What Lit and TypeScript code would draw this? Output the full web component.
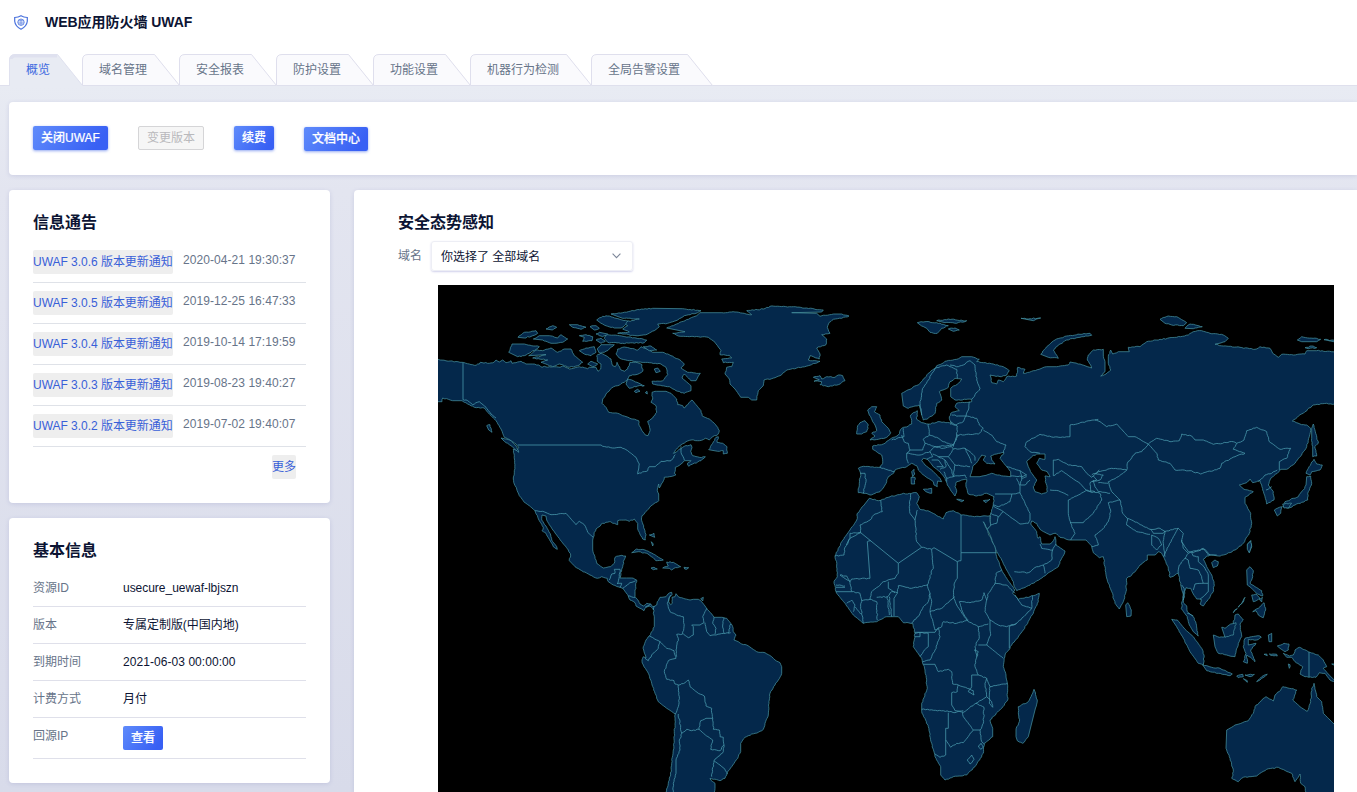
import { LitElement, html, svg, css } from "lit";
import { customElement } from "lit/decorators.js";

// Coastlines are digitised on overlapping sheets at three times the drawing scale.
// Each sheet has its own origin in map space.
const SHEETS: Record<string, [number, number]> = {
  a: [436, 284],
  b: [620, 284],
  c: [520, 500],
  d: [820, 470],
  e: [840, 300],
  f: [1040, 300],
  g: [1060, 520],
};

// Repeatable noise in -1..1 for a place on the map.
function noise(x: number, y: number): number {
  const n = Math.sin(x * 12.9898 + y * 78.233) * 43758.5453;
  return (n - Math.floor(n)) * 2 - 1;
}

// Turns sheet coordinates into map coordinates and roughens the longer natural edges.
// Axis-aligned and very long edges are surveyed boundaries and stay straight.
function points(...parts: string[]): string {
  const raw = parts.flatMap((part) => {
    const [ox, oy] = SHEETS[part[0]];
    return part
      .slice(1)
      .trim()
      .split(/\s+/)
      .map((pair) => {
        const [x, y] = pair.split(",").map(Number);
        return [ox + x / 3, oy + y / 3];
      });
  });
  const out: string[] = [];
  raw.forEach(([x, y], i) => {
    out.push(`${x.toFixed(1)},${y.toFixed(1)}`);
    if (i === raw.length - 1) return;
    const [nx, ny] = raw[i + 1];
    const dx = nx - x;
    const dy = ny - y;
    const len = Math.hypot(dx, dy);
    if (len < 3.4 || len > 24 || Math.abs(dx) < 0.2 || Math.abs(dy) < 0.2) return;
    const steps = Math.round(len / 1.9);
    for (let s = 1; s < steps; s++) {
      const px = x + (dx * s) / steps;
      const py = y + (dy * s) / steps;
      const k = 0.5 * noise(Math.round(px), Math.round(py));
      out.push(`${(px + (Math.abs(dy) / len) * k).toFixed(1)},${(py + (Math.abs(dx) / len) * k).toFixed(1)}`);
    }
  });
  return out.join(" ");
}

const AMERICAS = points(
  "a 6,226 42,231 78,235 100,240 115,244 130,240 133,235 160,238 175,234 180,228 190,234 200,228 210,236 225,230 228,238 240,236 255,232 270,240 290,240 308,243 318,250 325,247 345,249 372,250 380,246 400,255 430,248 455,254 460,250 480,250 486,262 494,255 495,240 484,232 482,215 495,207 510,215 525,225 530,245 538,248 543,235 555,258 566,262 575,255 582,235 605,236 618,242 620,262 600,272 580,275 573,290 560,296 545,305 527,312 510,330 500,345 498,358 510,370 518,385 545,388 560,395 590,405 608,410 610,425 618,440 628,453 636,455 642,440 640,425 635,412 650,402 662,385 660,365 645,355 650,345 648,325 662,322 690,322 705,328 715,338 722,345 725,362 740,365 744,372 755,362 768,348 780,362 795,380 798,395 820,405 835,418 845,430 850,440 845,452 835,455 820,468 808,463 790,470 765,468 750,473 735,483 722,495 712,508 725,500 745,487 765,482 768,490 764,502 770,515 790,520 808,518 795,530 770,540 758,547 754,540 765,530 745,530 735,540 718,550 715,568 720,572 700,578 685,580 680,595 670,612 668,600 664,620 668,630 668,650 650,662 630,682 618,695 617,710 625,735 630,752 628,768 620,765 610,745 605,735 605,718 595,705 580,712 570,708 545,710 545,722 520,713 500,718 480,735 475,745 472,760",
  "c 218,120 218,150 225,175 232,192 250,204 272,200 283,190 285,172 300,167 317,168 312,180 308,200 305,208 302,228 300,234 320,234 335,234 350,240 347,260 345,275 345,290 352,298 360,312 370,318 380,310 392,312 398,320 410,315 412,305 420,292 438,290 444,282 455,277 456,284 448,293 446,305 452,314 457,310 456,292 465,290 468,281 475,290 490,295 510,300 520,298 535,298 542,302 555,318 562,328 575,342 582,352 600,352 620,355 632,370 638,380 640,395 648,405 642,420 655,425 665,432 680,435 695,445 710,455 735,458 755,470 765,480 780,488 785,500 785,520 775,540 765,555 750,580 748,600 746,620 745,645 735,670 730,688 715,697 695,702 675,712 662,730 662,755 655,770 645,785 635,800 625,812 620,825 615,835 600,842 580,838 570,835 572,840 585,850 585,865 582,890 435,890 445,850 452,825 455,790 460,750 463,700 465,660 466,642 440,625 415,605 405,580 395,550 385,520 372,500 366,485 370,470 378,474 372,455 370,440 378,420 388,408 395,395 403,380 403,350 400,340 402,332 398,325 390,318 378,322 372,332 360,325 348,318 345,308 330,300 325,288 318,278 308,265 300,262 280,255 265,245 262,235 245,230 232,235 210,225 185,212 165,200 148,182 152,165 145,150 125,125 110,105 95,85 80,60 78,48 66,45 65,60 80,82 92,105 95,120 110,140 112,148 100,140 88,118 78,100 66,92 70,82 58,62 45,32",
  "a 280,665 265,655 250,635 242,615 235,600 232,585 235,560 236,530 235,515 232,495 245,500 248,490 240,480 225,470 205,460 200,448 195,435 180,410 165,395 155,385 145,372 115,370 100,362 85,355 78,350 50,350 20,342 18,353 6,353",
  "a 0,353 0,226"
);

const EURASIA = points(
  "e 185,280 210,268 240,250 265,220 295,195 320,183 350,178 365,170 395,170 418,178 410,185 430,188 460,192 490,200 508,212 500,225 480,230 450,225 455,248 470,252 475,240 490,245 500,230 530,228 533,202 555,208 550,220 580,212 620,200 650,200 685,195 690,186 720,192 755,204",
  "f 152,195 142,180 145,165 160,150 190,148 190,165 195,185 195,215 182,228 198,222 212,210 205,190 205,170 212,150 218,162 235,155 268,155 265,142 300,140 320,125 360,118 410,112 445,105 460,95 485,92 510,100 550,105 565,115 555,125 525,133 550,138 600,142 645,148 660,140 690,145 698,160 715,172 725,163 760,165 795,162 800,152 830,152 890,157 890,313 860,310 820,315 795,335 757,363 780,372 800,375 812,385 808,410 800,440 780,470 765,490 740,508 722,508 712,520 692,535 688,545 685,555 700,575 702,600 680,612 675,590 668,570 665,555 660,542 638,548 630,537 620,548 598,555 612,568 640,575 615,592 615,610 632,640 635,670 628,700 610,730 585,750 560,762 535,768",
  "g 468,107 455,105 440,108 430,118 440,140 455,165 462,190 460,215 445,238 430,258 420,252 424,238 410,237 400,222 392,205 378,203 372,225 370,248 380,258 382,275 400,290 408,310 415,348 400,335 388,315 382,290 364,266 366,245 370,225 362,195 355,160 345,165 330,172 325,145 315,120 305,100 295,95 285,105 262,105 262,120 240,135 215,165 200,175 198,215 190,245 178,267 165,250 155,215 142,180 135,140 130,110 118,113 100,98 95,78 78,60 30,60 0,52",
  "d 708,190 690,195 680,190 660,178 650,160 635,153 632,162 650,185 654,205 660,200 665,222 690,222 700,212 705,200 708,225 735,243 725,265 715,290 670,320 640,340 590,362 583,350 580,335 560,300 545,270 525,235 510,195 502,178 511,165 512,130 520,105 522,80 500,70 470,78 445,72 438,50 440,28",
  "e 375,538 365,540 350,545 345,560 350,572 345,588 335,575 322,555 315,535 300,515 280,500 265,480 250,475 245,482 255,495 275,510 300,535 305,545 293,543 292,560 282,555 280,545 250,525 235,510 230,497 215,490 200,500 165,510 162,518 145,530 135,555 120,575 90,585 78,580 55,578 58,550 62,520 55,505 65,500 120,502 128,490 125,465 98,448 98,438 130,432 150,418 175,405 185,385 205,378 215,372 212,345 220,338 232,332 230,358 245,368 265,372 300,365 335,370 328,355 332,340 345,335 358,332 345,320 350,310 395,305 395,298 345,300 332,290 332,265 360,245 365,237 345,235 330,245 325,262 298,275 305,300 290,310 285,340 265,355 250,360 245,345 238,315 225,318 205,325 190,318"
);

const AFRICA = points(
  "d 148,85 175,92 210,80 245,72 290,68 298,80 290,100 300,118 330,125 370,147 378,128 400,122 425,135 480,140 510,137 512,165 502,178 490,155 505,190 525,232 530,260 545,300 560,325 585,360 578,370 595,388 630,380 658,370 655,395 640,430 610,480 575,525 555,555 550,590 558,615 562,640 563,690 545,715 510,750 518,775 518,800 493,820 490,850 465,890 440,915 400,920 375,930 362,915 362,890 345,860 335,820 325,770 305,725 305,700 322,655 315,600 305,565 280,530 285,490 278,460 250,458 235,440 200,440 170,455 130,460 100,435 75,400 50,370 42,335 52,320 50,285 45,258 65,215 90,180 110,150 112,130 130,108"
);

const ISLANDS = [
  // Greenland
  "b 140,132 165,122 190,112 210,103 230,95 240,86 300,86 345,84 395,92 380,80 430,75 450,67 520,68 560,72 610,78 605,84 515,86 590,88 600,97 640,90 665,90 687,96 665,103 640,106 628,115 622,130 630,148 605,152 620,165 618,182 590,192 600,210 598,225 570,215 565,228 600,232 565,245 530,252 500,258 480,275 455,284 432,288 430,305 415,320 410,348 395,348 385,340 362,340 345,315 330,300 328,285 315,270 320,250 335,248 340,235 310,236 305,225 335,222 328,214 300,212 303,200 285,175 265,160 235,158 175,156 158,148 195,143",
  // Arctic archipelago
  "a 525,90 560,86 600,78 650,73 740,74 795,80 780,88 745,95 720,110 695,118 665,120 670,128 655,140 635,150 600,155 560,150 545,148 580,144 560,135 575,125 560,115 610,105 560,103",
  "a 482,108 500,97 520,96 540,103 575,112 565,125 555,132 535,132 515,127 495,118",
  "a 540,210 545,195 560,190 580,192 605,198 615,188 635,196 650,205 680,205 705,215 735,230 745,240 735,252 755,265 793,268 780,290 765,290 745,270 738,282 765,305 765,320 745,328 720,320 700,308 650,300 648,292 680,290 695,272 690,250 675,240 640,236 580,230 550,222",
  "a 510,152 550,155 600,162 632,168 625,176 560,178 515,175 505,163",
  "a 430,155 450,152 470,158 468,170 440,172 445,160",
  "a 278,215 300,198 320,200 345,192 365,205 385,195 405,195 415,215 440,235 425,245 400,250 370,240 350,248 315,235 335,228 290,222 330,212",
  "a 218,205 228,180 265,180 310,188 285,205 265,215 245,218",
  "a 246,160 265,145 300,140 305,148 290,155 265,162",
  "a 292,165 310,155 340,155 365,162 375,152 395,165 380,175 345,178 320,168",
  "a 330,135 350,125 362,130 350,138",
  "a 400,122 425,122 450,130 435,136 410,130",
  "a 462,128 480,125 490,133 475,138",
  "a 480,168 495,163 508,172 495,178",
  "a 430,200 450,192 475,188 480,205 465,215 445,210",
  "a 484,195 495,182 535,182 520,195 505,205 490,207",
  "a 455,240 465,232 485,240 470,248",
  "a 622,188 645,186 662,198 640,200",
  "a 575,285 592,290 625,305 605,306 580,313 570,300",
  "a 655,255 665,252 673,262 660,266",
  "a 595,322 605,316 612,322 600,326",
  "a 628,326 633,322 634,330",
  "a 490,145 480,150 500,158 515,150",
  // Vancouver, Haida Gwaii, Alexander archipelago
  "a 195,462 225,470 243,490 248,505 225,485 205,472",
  "a 152,425 162,422 168,445 158,438",
  // Newfoundland
  "a 818,497 830,478 840,460 847,458 843,475 860,478 873,488 874,508 862,510 862,500 845,502",
  // Iceland
  "b 580,280 600,275 605,285 620,278 645,280 655,273 668,275 675,290 655,302 625,308 600,302 605,293 582,292 598,287",
  // Caribbean
  "c 335,158 350,147 375,150 400,162 430,180 408,182 398,172 380,160 355,155",
  "c 428,204 445,198 440,186 460,187 482,200 462,205 455,210 448,205",
  "c 393,204 402,202 412,207 400,209",
  "c 492,202 506,203 500,208 494,207",
  "c 388,105 402,100 404,112",
  "c 394,125 400,132 398,138",
  "c 542,296 550,292 548,303",
  // British Isles
  "e 83,330 95,320 110,320 103,335 120,345 125,365 145,385 152,398 140,412 115,418 90,420 105,408 95,400 110,392 105,375 98,365 92,350 88,345",
  "e 50,402 52,382 60,368 75,362 85,375 80,395 65,402",
  // Mediterranean
  "e 215,515 222,508 224,522 218,530",
  "e 213,532 225,532 224,552 214,552",
  "e 250,568 275,565 275,580 258,575",
  "e 350,598 372,601 365,605",
  "e 430,602 450,598 438,608",
  // Svalbard, Franz Josef Land, Novaya Zemlya
  "e 232,68 255,65 290,68 310,73 325,77 305,85 292,100 270,97 260,85 245,78",
  "e 290,62 325,57 380,62 350,70 315,68",
  "e 325,87 345,84 358,90 340,94",
  "e 543,55 570,56 602,54 580,62",
  "e 602,163 620,140 645,120 680,108 720,103 750,100 755,106 720,112 680,120 655,135 640,150 655,175 625,172",
  // Siberian islands
  "f 360,58 385,48 410,50 440,68 430,77 395,75 375,70",
  "f 435,85 450,72 487,80 460,86",
  "f 772,120 785,110 842,118 830,125 785,125",
  "f 852,119 890,122 890,127",
  "f 795,143 815,138 830,143 805,146",
  // Sakhalin and Japan
  "f 815,385 820,372 827,400 835,430 824,440 830,468 818,470 818,440 815,415",
  "f 798,520 805,505 822,478 830,492 847,495 840,510 815,515 810,525",
  "f 800,530 812,528 815,550 805,575 803,600 785,607 765,615 745,625 728,620 735,605 760,595 775,590 790,570 798,555",
  "f 703,630 725,620 722,640 712,648",
  "f 728,612 755,610 748,622 732,624",
  "f 622,735 632,722 635,740 628,758",
  // South-east Asia
  "g 455,128 465,120 475,125 472,138 460,143",
  "g 562,72 572,62 575,75 568,98 562,88",
  "g 560,150 570,140 580,152 578,170 570,190 585,200 605,212 608,228 592,222 575,205 562,195",
  "g 575,225 588,222 600,235 580,245",
  "g 598,238 607,232 605,246",
  "g 578,275 595,265 612,248 617,270 610,293 595,285 588,272",
  "g 555,232 548,248 535,262 547,246",
  "g 532,266 520,278 524,270",
  "g 460,345 478,352 495,350 520,310 525,285 535,282 550,300 540,312 545,350 535,370 525,410 500,405 475,400 465,380",
  "g 485,322 495,325 512,312 528,308 520,345 495,352",
  "g 550,425 558,400 550,380 555,355 575,350 600,348 604,352 590,360 565,358 565,375 588,370 572,390 585,425 572,412 560,405 562,430",
  "g 335,298 352,300 375,328 400,350 425,385 432,405 430,435 415,430 390,395 370,355 350,320",
  "g 428,435 455,442 480,445 517,462 510,467 475,460 440,452",
  "g 530,468 548,463 550,470 535,473",
  "g 555,465 583,463 570,470",
  "g 590,485 605,470 622,463 600,480",
  "g 550,476 562,482 562,487",
  "g 612,403 620,402 622,407",
  "g 628,402 650,403 652,408 632,406",
  "g 625,345 635,340 635,365 627,365",
  "g 685,432 690,434 688,445",
  "g 197,255 203,248 214,270 213,288 200,290",
  "g 652,378 672,370 687,372 685,390 675,395 660,385",
  "g 670,400 688,408 700,405 705,390 718,382 745,395 775,405 790,420 800,440 790,445 805,462 830,488 810,480 795,460 778,458 768,472 735,470 720,462 728,440 705,425 695,412 680,412",
  "g 815,432 828,432 828,438",
  // Australia
  "g 500,630 525,615 565,602 580,580 585,560 600,545 618,530 640,543 645,525 662,510 668,500 710,510 698,540 720,560 742,574 752,545 755,505 762,490 770,530 785,545 790,580 815,605 830,620 830,830 740,830 735,800 722,790 720,762 705,785 695,760 655,742 620,748 590,768 550,772 535,785 515,775 520,755 510,715 498,685",
  // Madagascar
  "d 588,800 588,780 598,755 595,710 625,695 642,658 652,690 645,720 625,800 608,820 592,812",
].map((s) => points(s));

const WATERS = [
  // Black Sea and Azov
  "e 390,530 398,500 412,485 425,465 437,468 430,480 440,490 465,492 455,480 452,468 470,462 492,458 480,475 500,500 512,515 512,530 490,528 455,520 420,530",
  // Caspian Sea
  "e 560,485 575,470 590,462 615,462 615,478 598,475 590,490 605,510 622,515 630,530 615,528 618,550 622,575 605,582 585,575 580,560 590,540 575,520 565,500",
].map((s) => points(s));

const BORDERS = [
  "a 81,236 81,347 95,350 110,362 130,353 150,370 165,390 180,402",
  "a 245,483 495,483 500,487 530,492 555,490 575,500 600,520 610,540 605,570 635,560 640,548 658,548 675,532 705,530 718,512",
  "a 735,487 735,505 745,528",
  "a 297,680 320,682 345,692 390,688 420,722 430,712 445,722 455,745 472,760",
  "c 268,240 275,222 285,220 283,208 300,208 297,235 292,252",
  "c 300,262 305,250 292,250",
  "c 308,265 325,252 347,242",
  "c 325,288 345,292",
  "c 375,322 392,312",
  "c 400,330 403,318",
  "c 452,285 442,310 450,335 470,345 490,350 492,380 488,402 470,403 475,415 468,450 470,470",
  "c 388,408 420,425 440,445 462,452 468,475 445,482 433,515 440,538 462,542 465,552 475,555 478,590 475,620 466,642",
  "c 420,425 415,445 395,465 385,482 375,475",
  "c 490,402 505,413 520,405 520,380 515,375 540,375 552,368 548,350 560,325",
  "c 555,368 560,395 570,407 600,402 632,398",
  "c 582,352 578,370 588,385 585,402",
  "c 612,353 608,375 612,400",
  "c 632,372 625,400",
  "c 475,555 495,548 505,540 510,560 535,580 553,588 558,618 575,625 578,655 558,655 542,662 537,688 515,692 500,688 485,700 475,642",
  "c 485,700 478,725 480,750 468,780 468,820 460,850 458,890",
  "c 537,688 560,708 578,720 572,748 600,752 612,735 610,712 600,710 598,690 580,688 578,655",
  "c 612,735 610,755 582,782 575,830",
  "c 582,782 600,795 615,808 622,822",
  "d 182,90 187,125 165,132 150,150 120,165 122,188 90,190 90,205 75,232 72,255 45,258",
  "d 122,188 92,203 80,225",
  "d 122,188 235,280 235,310 225,325 200,332 190,335 175,350 155,365 150,388",
  "d 142,215 150,325 95,327 90,335 60,315",
  "d 142,215 152,212",
  "d 235,280 305,232 290,215 285,150 270,130 268,110 272,72",
  "d 305,232 335,238 342,233 412,275 412,325 402,345 400,380 410,405 440,450",
  "d 285,150 292,120",
  "d 335,238 340,290 322,345 275,355 235,347 232,370 222,385 222,438",
  "d 322,345 330,370 325,395 310,410 298,435 275,458",
  "d 330,370 335,395 330,425 365,415 405,380",
  "d 423,135 423,248 530,248",
  "d 423,248 423,272 412,275",
  "d 418,395 450,398 485,390 492,368 500,390 495,425 510,450 535,465 560,470 590,460 635,415 605,405 585,375",
  "d 637,378 635,415",
  "d 418,395 430,430 445,455 475,470 505,462",
  "d 500,390 505,370 525,340 560,345 585,370",
  "d 525,340 528,310 545,300",
  "d 590,460 568,470 568,535",
  "d 510,450 510,480 512,495 500,525 550,565",
  "d 475,470 478,500 465,530 470,555 465,590 475,615 500,625 510,650 563,640",
  "d 500,525 475,525",
  "d 462,540 475,545 470,560",
  "d 330,425 340,460 345,480 365,470 370,455 410,460 445,450",
  "d 285,487 345,487 355,475 360,500 345,540 330,570 308,575",
  "d 285,490 300,488 300,500 285,500",
  "d 300,488 325,490 325,530 310,545 300,560",
  "d 310,583 345,583 355,605 385,598 395,605 398,642 415,645 460,662 462,675 445,665 455,650 455,615 475,615",
  "d 415,645 412,665 395,668 395,705 405,722 430,727 468,700 485,690 500,680 495,640 500,625",
  "d 305,718 370,722 405,728 430,722",
  "d 385,728 385,775 377,775 377,855 360,862 345,852",
  "d 377,810 392,832 410,820 430,818 460,780 430,740 428,727",
  "d 468,700 492,712 490,760 480,780 460,780",
  "d 480,780 485,815 493,822",
  "d 475,828 483,820 490,832 482,838 475,828",
  "d 442,870 455,855 462,868 450,882 442,870",
  "d 500,680 515,695 518,712 508,700 510,650",
  "d 60,315 80,318 90,335 95,365 120,370 125,390 122,410 130,460",
  "d 48,345 75,348",
  "d 48,352 75,352",
  "d 48,365 95,365",
  "d 80,400 95,390 105,405 100,425",
  "d 105,410 122,432",
  "d 125,392 150,388 170,395 172,450",
  "d 170,382 202,380 208,435",
  "d 202,380 215,365 232,368",
  "d 205,335 205,355 225,368",
  "d 208,380 215,440",
  "d 512,130 535,140 550,125 600,162 625,160 630,150",
  "d 535,140 530,160 512,165",
  "d 520,105 535,110 570,95 575,72 525,72",
  "d 550,125 520,108",
  "d 575,72 600,68 615,100 630,130 630,150",
  "d 583,305 625,308 650,290 670,285 675,310",
  "d 670,285 695,270 698,240 665,235 660,222",
  "d 698,240 708,222",
  "d 590,25 600,48 600,68",
  "d 690,60 715,62 745,76",
  "e 245,345 240,310 248,265 265,240 285,205 320,195 330,200 350,208 352,235",
  "e 330,195 355,200 370,195 390,182 405,195 410,240 420,265 395,298",
  "e 388,305 385,330 378,348 355,348 335,345",
  "e 378,348 410,355 418,375 430,385 415,402 350,405 352,378 330,365",
  "e 378,348 370,365 348,375 330,372",
  "e 265,372 268,405 250,418 255,430 285,440 340,435 355,405",
  "e 268,405 290,412 310,425 325,430 340,435",
  "e 350,405 340,440",
  "e 430,390 455,405 470,425 498,435 490,458",
  "e 185,405 192,425 205,430 210,450 200,460 200,475 205,490",
  "e 190,385 192,410 155,420",
  "e 210,450 248,450 255,430",
  "e 200,460 240,465 270,455 285,440",
  "e 270,455 278,470 260,478",
  "e 285,440 310,445 335,440 340,447 325,470 295,470 278,462",
  "e 340,447 375,445 390,455 405,470 405,482",
  "e 375,445 385,465 395,490",
  "e 325,470 345,495 390,500",
  "e 345,495 340,530 375,525 380,535",
  "e 295,470 315,480 318,500 300,508",
  "e 275,480 295,480 310,500 290,500",
  "e 315,480 335,510 340,530 320,535 312,515",
  "e 320,535 320,545",
  "e 60,520 75,520 78,545 70,580",
  "e 120,502 162,515",
  "e 500,500 540,512 560,525 545,530 512,528",
  "e 540,512 545,535 540,555 555,555 570,540",
  "e 545,535 560,530",
  "e 640,527 640,480 655,478 685,495 725,500 740,520 755,532 778,510",
  "e 640,527 665,512 690,530 720,550 740,572 765,575",
  "e 555,440 560,425 600,403 640,412 690,410 690,375 750,362 775,358",
  "e 555,440 570,455 600,460",
  "f 165,360 180,365 200,380 230,372 265,410 285,410 325,432 305,455 285,460 262,490 260,510 215,505 175,515 155,525",
  "f 325,432 350,415 390,425 418,422 425,402 455,408 465,420 490,420 520,433 580,425 590,430 580,448 615,460 585,470 545,490 540,505 482,522 450,512 405,510 390,490 355,480 350,460 325,432",
  "f 590,430 612,420 620,392 650,382 680,395 688,425 720,448 752,445 740,475 718,485 718,510",
  "f 260,510 235,530 205,545 215,575 240,600 248,640 262,655 275,660 330,688 360,685 375,695 415,685 430,700 425,725 445,755 460,758 490,745 505,765 530,765",
  "f 330,703 290,695 260,675 262,655",
  "f 332,688 340,700 370,700 375,692",
  "f 335,705 335,735 350,750 365,735 355,715 335,705",
  "f 375,695 370,730 375,770",
  "f 415,685 400,710 385,740 370,770",
  "f 240,600 205,608 212,635 205,665 185,690 165,705 175,735 155,740",
  "f 90,668 130,668 160,640 185,600 180,580 150,575 140,570 115,585 85,600 85,640 92,670 105,700 92,720",
  "f 155,545 180,540 190,525 165,520",
  "f 160,540 165,560 175,575 210,580",
  "f 175,548 205,550",
  "f 160,528 170,540 150,548 152,575",
  "f 655,545 675,525 695,520 712,510",
  "f 678,570 695,560",
  "g 355,160 358,135 375,115 385,100 370,85 365,60",
  "g 385,100 395,95 415,90 435,88 450,105",
  "g 395,95 400,108 415,110 415,125 432,140 445,165 445,190 430,190 425,170 415,150 390,145 385,120 375,115",
  "g 445,190 445,215 430,230 420,238",
  "g 400,210 405,192 430,190",
  "g 365,195 372,205 370,240",
  "g 382,280 400,288",
  "g 747,396 747,471",
].map((s) => points(s));

const TABS = ["概览", "域名管理", "安全报表", "防护设置", "功能设置", "机器行为检测", "全局告警设置"];

const NOTICES = [
  ["UWAF 3.0.6 版本更新通知", "2020-04-21 19:30:37"],
  ["UWAF 3.0.5 版本更新通知", "2019-12-25 16:47:33"],
  ["UWAF 3.0.4 版本更新通知", "2019-10-14 17:19:59"],
  ["UWAF 3.0.3 版本更新通知", "2019-08-23 19:40:27"],
  ["UWAF 3.0.2 版本更新通知", "2019-07-02 19:40:07"],
];

const INFO = [
  ["资源ID", "usecure_uewaf-lbjszn"],
  ["版本", "专属定制版(中国内地)"],
  ["到期时间", "2021-06-03 00:00:00"],
  ["计费方式", "月付"],
];

@customElement("world-map")
class WorldMap extends LitElement {
  static styles = css`
    :host { display: block; width: 896px; height: 507px; background: #000; }
    svg { display: block; }
    .land { fill: #04284b; stroke: #448f9d; stroke-width: 0.75; stroke-linejoin: round; }
    .water { fill: #000; stroke: #448f9d; stroke-width: 0.75; }
    .border { fill: none; stroke: #4797ab; stroke-width: 0.8; stroke-linejoin: round; }
  `;
  render() {
    return html`<svg width="896" height="507" viewBox="438 285 896 507">
      ${[AMERICAS, EURASIA, AFRICA, ...ISLANDS].map((p) => svg`<polygon class="land" points=${p} />`)}
      ${WATERS.map((p) => svg`<polygon class="water" points=${p} />`)}
      ${BORDERS.map((p) => svg`<polyline class="border" points=${p} />`)}
    </svg>`;
  }
}

@customElement("app-root")
class AppRoot extends LitElement {
  static styles = css`
    :host {
      display: flex; flex-direction: column; width: 100%; height: 792px; overflow: hidden; box-sizing: border-box;
      font-family: "Liberation Sans", "Noto Sans CJK SC", sans-serif; font-size: 12px; line-height: 20px;
      color: #0c1433; background: #fff;
    }
    * { box-sizing: border-box; }
    .header { display: flex; align-items: center; height: 54px; padding: 0 0 10px 14px; gap: 17px; flex: none; }
    .header svg { flex: none; }
    .title { font-size: 14px; font-weight: 700; letter-spacing: -0.03px; }
    .tabs { display: flex; height: 32px; padding-left: 9px; flex: none; border-bottom: 1px solid #dfe0ed; }
    .tab { display: grid; height: 32px; color: #677489; }
    .tab svg, .tab span { grid-area: 1 / 1; }
    .tab svg { display: block; overflow: visible; }
    .tab span { padding: 6px 0 0 17px; z-index: 1; }
    .tab.active { color: #3c69e0; }
    .shape { fill: #fafafd; stroke: #dfdfed; }
    .active .shape { fill: #e8ebf3; stroke: #dfe1ef; }
    .base { stroke: #dfe0ed; }
    .active .base { stroke: #e8ebf3; }
    .body {
      flex: 1; min-height: 0; display: flex; flex-direction: column; gap: 15px; padding: 16px 0 0 9px;
      background: linear-gradient(#e8ebf3, #e3e5f0 15%, #d8dbea);
    }
    .card { background: #fff; border-radius: 4px; box-shadow: 0 1px 4px rgba(120, 125, 180, 0.22); }
    .toolbar { display: flex; flex: none; height: 73px; gap: 30px; padding: 24px; border-radius: 4px 0 0 4px; align-items: flex-start; }
    .btn {
      display: block; height: 24px; line-height: 25px; padding: 0 8px; border-radius: 2px; font-weight: 500; color: #fff;
      background: linear-gradient(125deg, #5f8bfb, #3860f4 85%); box-shadow: 0 1px 3px rgba(56, 96, 230, 0.55);
      white-space: nowrap; -webkit-text-stroke: 0.2px #fff;
    }
    .btn.disabled {
      color: #b9b9bc; background: #f6f6f6; border: 1px solid #d5d5d7; line-height: 23px; font-weight: 400;
      box-shadow: none; -webkit-text-stroke: 0;
    }
    .btn.low { margin-top: 1px; }
    .btn.flat { box-shadow: none; }
    .columns { display: flex; flex: 1; min-height: 0; gap: 24px; align-items: flex-start; }
    .side { display: flex; flex-direction: column; gap: 15px; width: 321px; flex: none; }
    .panel { padding: 21px 24px 24px; }
    .heading { font-size: 16px; line-height: 24px; font-weight: 700; margin-bottom: 7px; }
    .notice { display: flex; gap: 10px; height: 41px; padding: 8px 0; border-bottom: 1px solid #dfe2e8; }
    .link {
      height: 24px; line-height: 24px; background: #eee; color: #3860d8; border-radius: 2px; white-space: nowrap;
    }
    .notice .link { width: 140px; letter-spacing: -0.03px; }
    .date { color: #677489; letter-spacing: 0.06px; white-space: nowrap; }
    .more { display: flex; justify-content: flex-end; padding: 8px 10px 0 0; }
    .info { display: flex; padding: 8px 0; border-bottom: 1px solid #dfe0ea; }
    .label { width: 90px; line-height: 20px; color: #677489; flex: none; }
    .value { line-height: 20px; white-space: nowrap; letter-spacing: -0.03px; }
    .value.date-value { letter-spacing: 0.06px; }
    .main { flex: 1; align-self: stretch; min-width: 0; padding: 21px 0 0 44px; border-radius: 4px 0 0 0; }
    .main .heading { margin-bottom: 6px; }
    .filter { display: flex; gap: 9px; height: 44px; }
    .filter .name { color: #677489; line-height: 31px; }
    .select {
      display: flex; align-items: center; justify-content: space-between; width: 202px; height: 30px; padding: 2px 11px 0 9px;
      border: 1px solid #edeef5; border-radius: 3px; box-shadow: 0 1px 2px rgba(110, 110, 190, 0.32);
    }
    .select svg { margin-top: -3px; }
    .map { padding-left: 40px; }
  `;

  renderTab(label: string, i: number) {
    const w = label.length * 12 + 49;
    return html`<div class="tab ${i === 0 ? "active" : ""}">
      <svg width=${w} height="32">
        <path class="shape" d="M.5 31.5V6Q.5.5 6 .5H${w - 24.5}L${w + 0.5} 31.5" />
        ${i === 0 ? svg`<path d="M2 5Q2 2 6 2H48" fill="none" stroke="#dfe1ef" stroke-width="3" />` : null}
        <path class="base" d="M1 31.5H${w}" />
      </svg>
      <span>${label}</span>
    </div>`;
  }

  render() {
    return html`
      <div class="header">
        <svg width="14" height="15" viewBox="0 0 14 15" fill="none" stroke="#4a72dd" stroke-width="1">
          <path d="M7 .8Q9.6 2.4 13.3 2.5V6.3Q12.8 11.3 7 14.2Q1.2 11.3.7 6.3V2.5Q4.4 2.4 7 .8Z" stroke-width="1.2" />
          <circle cx="7" cy="7.2" r="3.2" stroke-width=".8" />
          <path d="M3.8 7.2H10.2M7 4V10.4M4.4 5.6H9.6M4.4 8.8H9.6" stroke-width=".6" />
        </svg>
        <div class="title">WEB应用防火墙 UWAF</div>
      </div>
      <div class="tabs">${TABS.map((t, i) => this.renderTab(t, i))}</div>
      <div class="body">
        <div class="card toolbar">
          <div class="btn">关闭UWAF</div>
          <div class="btn disabled">变更版本</div>
          <div class="btn">续费</div>
          <div class="btn low">文档中心</div>
        </div>
        <div class="columns">
          <div class="side">
            <div class="card panel">
              <div class="heading">信息通告</div>
              ${NOTICES.map(([t, d]) => html`<div class="notice"><div class="link">${t}</div><div class="date">${d}</div></div>`)}
              <div class="more"><div class="link">更多</div></div>
            </div>
            <div class="card panel">
              <div class="heading">基本信息</div>
              ${INFO.map(([l, v], i) => html`<div class="info">
                <div class="label">${l}</div>
                <div class="value ${i === 2 ? "date-value" : ""}">${v}</div>
              </div>`)}
              <div class="info"><div class="label">回源IP</div><div class="btn flat">查看</div></div>
            </div>
          </div>
          <div class="card main">
            <div class="heading">安全态势感知</div>
            <div class="filter">
              <div class="name">域名</div>
              <div class="select">
                <span>你选择了 全部域名</span>
                <svg width="9" height="6" fill="none" stroke="#7b8598" stroke-width="1.1"><path d="M.6.7L4.5 4.7L8.4.7" /></svg>
              </div>
            </div>
            <div class="map"><world-map></world-map></div>
          </div>
        </div>
      </div>
    `;
  }
}
